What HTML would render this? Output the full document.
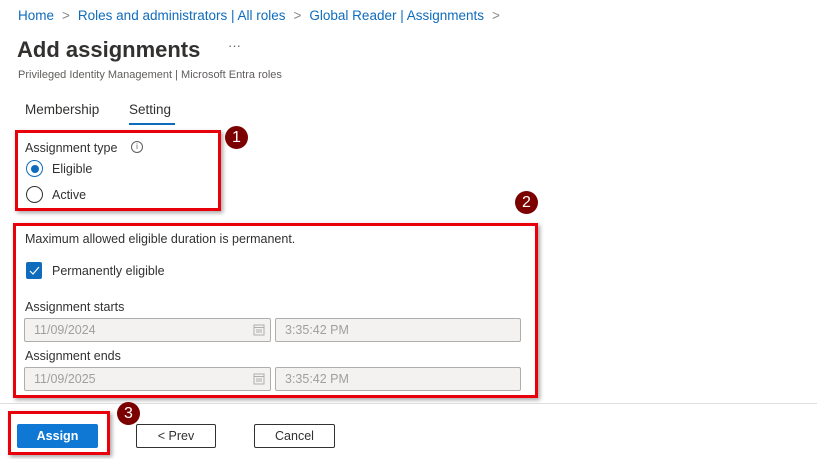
<!DOCTYPE html>
<html><head><meta charset="utf-8"><style>
*{margin:0;padding:0;box-sizing:border-box}
body{width:817px;height:459px;background:#fff;position:relative;overflow:hidden;font-family:"Liberation Sans",sans-serif;color:#323130}
.a{position:absolute;white-space:nowrap}
.bc{top:8px;left:18px;font-size:13.5px;color:#0f6cbd}
.bc span.s{color:#8a8886;margin:0 8px}
.red{position:absolute;border:3px solid #e8000b;box-shadow:2px 2px 4px rgba(0,0,0,.35)}
.badge{position:absolute;width:23px;height:23px;border-radius:50%;background:#7d0000;color:#fff;font-size:16px;text-align:center;line-height:23px}
.radio{position:absolute;width:17px;height:17px;border-radius:50%;border:1.5px solid #323130}
.inp{position:absolute;height:24px;background:#f3f2f1;border:1px solid #b0aeac;border-radius:2px;font-size:12.5px;color:#a19f9d;padding-left:9px;line-height:22px}
.btn{position:absolute;height:24px;border:1px solid #323130;border-radius:2px;font-size:12.5px;text-align:center;line-height:22px;background:#fff}
</style></head><body>
<div class="a bc">Home<span class="s">&gt;</span>Roles and administrators | All roles<span class="s">&gt;</span>Global Reader | Assignments<span class="s">&gt;</span></div>
<div class="a" style="top:37px;left:17px;font-size:22px;font-weight:bold;color:#323130">Add assignments</div>
<div class="a" style="top:38px;left:228px;font-size:13px;color:#605e5c">···</div>
<div class="a" style="top:69px;left:18px;font-size:11px;color:#605e5c">Privileged Identity Management | Microsoft Entra roles</div>
<div class="a" style="top:102px;left:25px;font-size:13.5px">Membership</div>
<div class="a" style="top:102px;left:129px;font-size:13.5px">Setting</div>
<div class="a" style="top:123px;left:129px;width:46px;height:2px;background:#0f6cbd"></div>

<div class="red" style="left:15px;top:130px;width:206px;height:81px"></div>
<div class="badge" style="left:225px;top:126px">1</div>
<div class="a" style="top:141px;left:25px;font-size:12.5px">Assignment type</div>
<div class="a" style="top:141px;left:131px;width:12px;height:12px;border:1px solid #605e5c;border-radius:50%;font-size:8px;text-align:center;line-height:10px;color:#605e5c">i</div>
<div class="radio" style="left:26px;top:160px;border-color:#0f6cbd"></div>
<div class="a" style="left:30.5px;top:164.5px;width:8px;height:8px;border-radius:50%;background:#0f6cbd"></div>
<div class="a" style="top:162px;left:52px;font-size:12.5px">Eligible</div>
<div class="radio" style="left:26px;top:186px"></div>
<div class="a" style="top:188px;left:52px;font-size:12.5px">Active</div>

<div class="red" style="left:13px;top:223px;width:525px;height:175px"></div>
<div class="badge" style="left:515px;top:191px">2</div>
<div class="a" style="top:232px;left:25px;font-size:12.5px">Maximum allowed eligible duration is permanent.</div>
<div class="a" style="top:262px;left:26px;width:16px;height:17px;background:#0f6cbd;border-radius:2px"></div>
<svg class="a" style="top:262px;left:26px" width="16" height="17"><path d="M4 9l3 3 6-7" stroke="#fff" stroke-width="1.2" fill="none"/></svg>
<div class="a" style="top:264px;left:52px;font-size:12.5px">Permanently eligible</div>
<div class="a" style="top:300px;left:25px;font-size:12.5px">Assignment starts</div>
<div class="inp" style="left:24px;top:318px;width:247px">11/09/2024</div>
<div class="inp" style="left:275px;top:318px;width:246px">3:35:42 PM</div>
<div class="a" style="top:349px;left:25px;font-size:12.5px">Assignment ends</div>
<div class="inp" style="left:24px;top:367px;width:247px">11/09/2025</div>
<div class="inp" style="left:275px;top:367px;width:246px">3:35:42 PM</div>
<svg class="a" style="left:253px;top:324px" width="12" height="12"><rect x="1" y="1" width="10" height="10" fill="none" stroke="#b0aeac"/><path d="M1 3.5h10M3 6h6M3 8h6" stroke="#b0aeac"/></svg>
<svg class="a" style="left:253px;top:373px" width="12" height="12"><rect x="1" y="1" width="10" height="10" fill="none" stroke="#b0aeac"/><path d="M1 3.5h10M3 6h6M3 8h6" stroke="#b0aeac"/></svg>

<div class="a" style="left:0;top:403px;width:817px;height:1px;background:#e1dfdd"></div>
<div class="red" style="left:8px;top:411px;width:102px;height:44px"></div>
<div class="btn" style="left:17px;top:424px;width:81px;background:#0f78d4;border-color:#0f78d4;color:#fff;font-weight:bold">Assign</div>
<div class="badge" style="left:117px;top:402px">3</div>
<div class="btn" style="left:136px;top:424px;width:80px">&lt; Prev</div>
<div class="btn" style="left:254px;top:424px;width:81px">Cancel</div>
</body></html>
